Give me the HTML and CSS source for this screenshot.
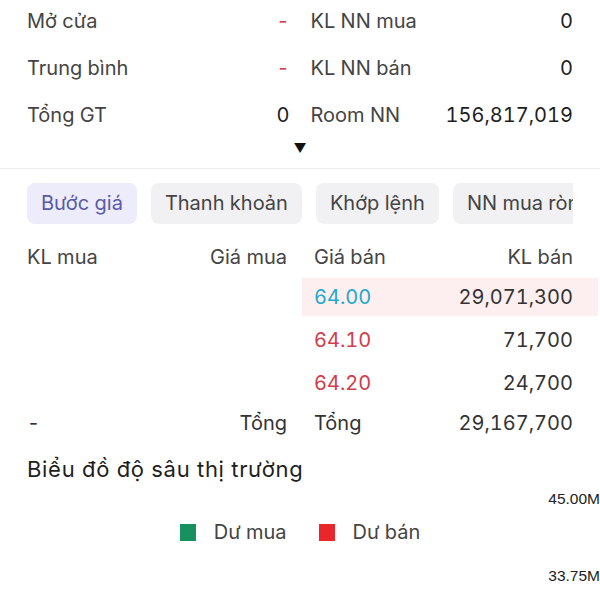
FILE: index.html
```html
<!DOCTYPE html>
<html lang="vi">

<head>
    <meta charset="UTF-8">
    <meta name="viewport" content="width=device-width, initial-scale=1.0">
    <title>Chi tiết cổ phiếu</title>
    <link rel="stylesheet" href="styles.css">
</head>

<body>
    <div class="stats">
        <div class="stats-col">
            <div class="stat-row"><span class="stat-label">Mở cửa</span><span class="stat-value dash">-</span></div>
            <div class="stat-row"><span class="stat-label">Trung bình</span><span class="stat-value dash">-</span></div>
            <div class="stat-row"><span class="stat-label">Tổng GT</span><span class="stat-value">0</span></div>
        </div>
        <div class="stats-col">
            <div class="stat-row"><span class="stat-label">KL NN mua</span><span class="stat-value">0</span></div>
            <div class="stat-row"><span class="stat-label">KL NN bán</span><span class="stat-value">0</span></div>
            <div class="stat-row"><span class="stat-label">Room NN</span><span class="stat-value">156,817,019</span></div>
        </div>
    </div>
    <div class="toggle">▼</div>

    <div class="tabs">
        <div class="tab active">Bước giá</div>
        <div class="tab">Thanh khoản</div>
        <div class="tab">Khớp lệnh</div>
        <div class="tab">NN mua ròng</div>
    </div>

    <div class="book">
        <div class="book-row head">
            <div class="half buy"><span>KL mua</span><span>Giá mua</span></div>
            <div class="half sell"><span>Giá bán</span><span>KL bán</span></div>
        </div>
        <div class="book-row">
            <div class="half buy"></div>
            <div class="half sell hl"><span class="ref">64.00</span><span>29,071,300</span></div>
        </div>
        <div class="book-row">
            <div class="half buy"></div>
            <div class="half sell"><span class="up">64.10</span><span>71,700</span></div>
        </div>
        <div class="book-row">
            <div class="half buy"></div>
            <div class="half sell"><span class="up">64.20</span><span>24,700</span></div>
        </div>
        <div class="book-row total">
            <div class="half buy"><span>-</span><span>Tổng</span></div>
            <div class="half sell"><span>Tổng</span><span>29,167,700</span></div>
        </div>
    </div>

    <h2 class="chart-title">Biểu đồ độ sâu thị trường</h2>
    <div class="chart">
        <div class="axis-label">45.00M</div>
        <div class="legend">
            <span class="swatch green"></span><span>Dư mua</span>
            <span class="swatch red"></span><span>Dư bán</span>
        </div>
        <div class="axis-label low">33.75M</div>
    </div>
</body>

</html>
```

FILE: styles.css
```css
body {
    font-family: Inter, 'Noto Sans', sans-serif;
    font-variant-numeric: tabular-nums;
    margin: 0;
    padding: 0;
    background: #ffffff;
    color: #333;
    width: 600px;
    overflow: hidden;
}

.stats {
    display: grid;
    grid-template-columns: 1fr 1fr;
    column-gap: 21px;
    padding: 0 27px;
    margin-top: -3px;
}

.stat-row {
    display: flex;
    justify-content: space-between;
    align-items: center;
    height: 47px;
    font-size: 20px;
}

.stat-label {
    color: #444;
}

.stat-value {
    color: #1e1e1e;
}

.stat-value.dash {
    color: #d0404c;
}

.toggle {
    text-align: center;
    font-size: 13px;
    color: #111;
    height: 30px;
    line-height: 20px;
    border-bottom: 1px solid #eeeeee;
}

/* tab strip is clipped at the right edge, like the app's scroller */
.tabs {
    display: flex;
    gap: 14px;
    margin: 14px 27px 0;
    overflow: hidden;
    white-space: nowrap;
}

.tab {
    flex: none;
    height: 41px;
    line-height: 41px;
    padding: 0 14px;
    border-radius: 8px;
    background: #f1f1f3;
    color: #444;
    font-size: 20px;
}

.tab.active {
    background: #ececfa;
    color: #5a5aa8;
}

.book {
    margin-top: 16px;
}

.book-row {
    display: grid;
    grid-template-columns: 302px 296px;
    height: 38px;
    margin-bottom: 5px;
    font-size: 20px;
}

.book-row.head {
    height: 34px;
    margin-bottom: 4px;
    color: #444;
}

.book-row.total {
    height: 32px;
}

.half {
    display: flex;
    justify-content: space-between;
    align-items: center;
}

.half.buy {
    padding: 0 15px 0 27px;
}

.half.sell {
    padding: 0 25px 0 12px;
}

.half.hl {
    background: #fdeff0;
}

.ref {
    color: #25a8cc;
}

.up {
    color: #d23c4b;
}

.chart-title {
    margin: 15px 27px 0;
    font-size: 22px;
    letter-spacing: 0.7px;
    font-weight: normal;
    color: #1e1e1e;
    line-height: 30px;
}

.chart {
    height: 130px;
}

.axis-label {
    text-align: right;
    font-family: 'Liberation Sans', Arial, sans-serif;
    font-size: 15.5px;
    color: #222;
    margin-top: 5px;
    line-height: 20px;
}

.axis-label.low {
    margin-top: 17px;
}

.legend {
    display: flex;
    align-items: center;
    justify-content: center;
    margin-top: 6px;
    font-size: 20px;
    color: #444;
    height: 34px;
}

.swatch {
    width: 16px;
    height: 17px;
    margin-right: 18px;
}

.swatch.green {
    background: #179160;
}

.swatch.red {
    background: #e8262c;
    margin-left: 32px;
}
```
